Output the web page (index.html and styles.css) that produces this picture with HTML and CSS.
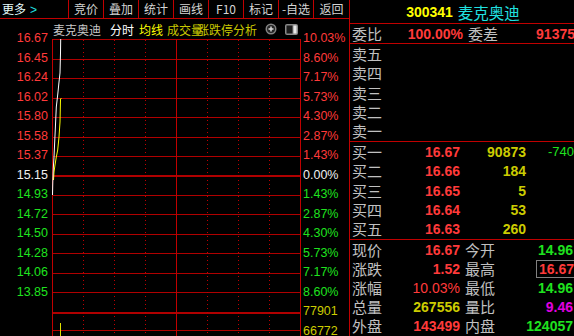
FILE: index.html
```html
<!DOCTYPE html>
<html lang="zh-CN">
<head>
    <meta charset="UTF-8">
    <title>麦克奥迪 分时</title>
    <link rel="stylesheet" href="styles.css">
</head>
<body>
    <div class="screen">
        <div class="left">
            <div class="toolbar">
                <div class="tb-item tb-more">更多<span class="arrow">&gt;</span></div>
                <div class="tb-item">竞价</div>
                <div class="tb-item">叠加</div>
                <div class="tb-item">统计</div>
                <div class="tb-item">画线</div>
                <div class="tb-item">F10</div>
                <div class="tb-item">标记</div>
                <div class="tb-item">-自选</div>
                <div class="tb-item tb-last">返回</div>
            </div>

            <div class="titlebar">
                <span class="t-name">麦克奥迪</span>
                <span class="t-fs">分时</span>
                <span class="t-ma">均线</span>
                <span class="t-vol">成交量</span>
                <span class="t-zdt">涨跌停分析</span>
                <svg class="ico ico-plus" width="12" height="12" viewBox="0 0 12 12">
                    <circle cx="6" cy="6" r="5.5" fill="#858585"/>
                    <circle cx="6" cy="6" r="4" fill="#262626"/>
                    <path d="M6 3.5v5M3.5 6h5" stroke="#d8d8d8" stroke-width="1.5"/>
                </svg>
                <svg class="ico ico-panel" width="13" height="11" viewBox="0 0 13 11">
                    <rect x="0" y="0" width="13" height="11" rx="2" fill="#8a8a8a"/>
                    <rect x="1.5" y="1.5" width="6" height="8" fill="#1c1c1c"/>
                    <rect x="8.5" y="1.5" width="3" height="8" fill="#e8e8e8"/>
                </svg>
            </div>

            <div class="chart">
                <div class="axis axis-left">
                    <div class="lbl up">16.67</div>
                    <div class="lbl up">16.45</div>
                    <div class="lbl up">16.24</div>
                    <div class="lbl up">16.02</div>
                    <div class="lbl up">15.80</div>
                    <div class="lbl up">15.58</div>
                    <div class="lbl up">15.37</div>
                    <div class="lbl flat">15.15</div>
                    <div class="lbl down">14.93</div>
                    <div class="lbl down">14.72</div>
                    <div class="lbl down">14.50</div>
                    <div class="lbl down">14.28</div>
                    <div class="lbl down">14.06</div>
                    <div class="lbl down">13.85</div>
                </div>

                <svg class="plot" width="249" height="297" viewBox="0 0 249 297">
                    <g class="grid">
                        <line x1="0" y1="0.5" x2="249" y2="0.5"/>
                        <line x1="0" y1="20.5" x2="249" y2="20.5"/>
                        <line x1="0" y1="39.5" x2="249" y2="39.5"/>
                        <line x1="0" y1="59.5" x2="249" y2="59.5"/>
                        <line x1="0" y1="78.5" x2="249" y2="78.5"/>
                        <line x1="0" y1="98.5" x2="249" y2="98.5"/>
                        <line x1="0" y1="117.5" x2="249" y2="117.5"/>
                        <line x1="0" y1="137" x2="249" y2="137" class="thick"/>
                        <line x1="0" y1="156.5" x2="249" y2="156.5"/>
                        <line x1="0" y1="175.5" x2="249" y2="175.5"/>
                        <line x1="0" y1="195.5" x2="249" y2="195.5"/>
                        <line x1="0" y1="214.5" x2="249" y2="214.5"/>
                        <line x1="0" y1="234.5" x2="249" y2="234.5"/>
                        <line x1="0" y1="253.5" x2="249" y2="253.5"/>
                        <line x1="0" y1="274" x2="249" y2="274" class="thick"/>
                        <line x1="0" y1="291.5" x2="249" y2="291.5"/>
                    </g>
                    <g class="vgrid">
                        <line x1="31.5" y1="1" x2="31.5" y2="297"/>
                        <line x1="62.5" y1="1" x2="62.5" y2="297"/>
                        <line x1="93.5" y1="1" x2="93.5" y2="297"/>
                        <line x1="155.5" y1="1" x2="155.5" y2="297"/>
                        <line x1="186.5" y1="1" x2="186.5" y2="297"/>
                        <line x1="217.5" y1="1" x2="217.5" y2="297"/>
                    </g>
                    <g class="frame">
                        <line x1="0.5" y1="0" x2="0.5" y2="297"/>
                        <line x1="124.5" y1="0" x2="124.5" y2="297"/>
                        <line x1="248.5" y1="0" x2="248.5" y2="297"/>
                    </g>
                    <polyline class="avg" points="9.5,59 8.5,60 8,83 7,98 5.7,111 4.3,118 3,126 2,133 1.5,141"/>
                    <polyline class="price" points="8.7,0 8.5,14 8,34 6.9,44 5.9,54 4.3,68 3.3,90 2.7,103 2,118 1.3,129 0.8,143 0.5,156"/>
                    <line class="volbar" x1="8.5" y1="284" x2="8.5" y2="297"/>
                </svg>

                <div class="axis axis-right">
                    <div class="lbl up">10.03%</div>
                    <div class="lbl up">8.60%</div>
                    <div class="lbl up">7.17%</div>
                    <div class="lbl up">5.73%</div>
                    <div class="lbl up">4.30%</div>
                    <div class="lbl up">2.87%</div>
                    <div class="lbl up">1.43%</div>
                    <div class="lbl flat">0.00%</div>
                    <div class="lbl down">1.43%</div>
                    <div class="lbl down">2.87%</div>
                    <div class="lbl down">4.30%</div>
                    <div class="lbl down">5.73%</div>
                    <div class="lbl down">7.17%</div>
                    <div class="lbl down">8.60%</div>
                    <div class="lbl vol">77901</div>
                    <div class="lbl vol lbl-short">66772</div>
                </div>
            </div>
        </div>

        <div class="right">
            <div class="quote-head">
                <span class="code">300341</span>
                <span class="qname">麦克奥迪</span>
            </div>

            <div class="row row-wb">
                <span class="name">委比</span>
                <span class="num up b">100.00%</span>
                <span class="name name2">委差</span>
                <span class="num up b">91375</span>
            </div>

            <div class="block sell">
                <div class="row book"><span class="name">卖五</span></div>
                <div class="row book"><span class="name">卖四</span></div>
                <div class="row book"><span class="name">卖三</span></div>
                <div class="row book"><span class="name">卖二</span></div>
                <div class="row book"><span class="name">卖一</span></div>
            </div>

            <div class="block buy">
                <div class="row book">
                    <span class="name">买一</span>
                    <span class="num up b">16.67</span>
                    <span class="num vol b">90873</span>
                    <span class="chg down">-740</span>
                </div>
                <div class="row book">
                    <span class="name">买二</span>
                    <span class="num up b">16.66</span>
                    <span class="num vol b">184</span>
                </div>
                <div class="row book">
                    <span class="name">买三</span>
                    <span class="num up b">16.65</span>
                    <span class="num vol b">5</span>
                </div>
                <div class="row book">
                    <span class="name">买四</span>
                    <span class="num up b">16.64</span>
                    <span class="num vol b">53</span>
                </div>
                <div class="row book">
                    <span class="name">买五</span>
                    <span class="num up b">16.63</span>
                    <span class="num vol b">260</span>
                </div>
            </div>

            <div class="stats">
                <div class="row stat">
                    <span class="name">现价</span>
                    <span class="num up b">16.67</span>
                    <span class="name name2">今开</span>
                    <span class="num down b">14.96</span>
                </div>
                <div class="row stat">
                    <span class="name">涨跌</span>
                    <span class="num up b">1.52</span>
                    <span class="name name2">最高</span>
                    <span class="num"><span class="boxed up b">16.67</span></span>
                </div>
                <div class="row stat">
                    <span class="name">涨幅</span>
                    <span class="num up">10.03%</span>
                    <span class="name name2">最低</span>
                    <span class="num down b">14.96</span>
                </div>
                <div class="row stat">
                    <span class="name">总量</span>
                    <span class="num vol b">267556</span>
                    <span class="name name2">量比</span>
                    <span class="num ratio b">9.46</span>
                </div>
                <div class="row stat">
                    <span class="name">外盘</span>
                    <span class="num up b">143499</span>
                    <span class="name name2">内盘</span>
                    <span class="num down b">124057</span>
                </div>
            </div>
        </div>
    </div>
</body>
</html>
```

FILE: styles.css
```css
html, body {
    margin: 0;
    padding: 0;
    background: #000;
}
body {
    width: 574px;
    height: 336px;
    overflow: hidden;
    font-family: "Noto Sans CJK SC", "Liberation Sans", sans-serif;
    color: #c0c0c0;
}
.screen {
    display: flex;
    height: 336px;
}

/* left: toolbar + chart */
.left {
    width: 349px;
    border-right: 1px solid #c00000;
    display: flex;
    flex-direction: column;
}
.toolbar {
    display: flex;
    height: 18px;
    border-bottom: 1px solid #c00000;
}
.tb-item {
    width: 34px;
    border-right: 1px solid #c00000;
    font-size: 12px;
    line-height: 18px;
    text-align: center;
    color: #d4d4d4;
    white-space: nowrap;
    overflow: hidden;
}
.tb-more {
    width: 69px;
    text-align: left;
    padding-left: 2px;
    box-sizing: border-box;
    color: #e4fbfb;
}
.tb-more .arrow {
    color: #20e0e0;
    margin-left: 4px;
    font-family: "Liberation Sans", sans-serif;
}
.tb-last {
    flex: 1;
    border-right: none;
}

.titlebar {
    height: 20px;
    display: flex;
    align-items: center;
    padding-left: 53px;
    font-size: 12px;
    white-space: nowrap;
}
.t-name { color: #c8c8c8; margin-right: 9px; }
.t-fs { color: #fff; margin-right: 5px; }
.t-ma { color: #ffff00; margin-right: 4px; }
.t-vol { color: #c8c800; }
.t-zdt { color: #c8c800; margin-left: -6px; }
.ico { margin-left: 8px; }
.ico-panel { margin-left: 8px; }

.chart {
    flex: 1;
    display: flex;
    min-height: 0;
}
.axis {
    display: flex;
    flex-direction: column;
    margin-top: -10px;
    font-family: "Liberation Sans", sans-serif;
    font-size: 12.5px;
}
.axis-left {
    width: 52px;
    text-align: right;
}
.axis-left .lbl {
    padding-right: 4px;
}
.axis-right {
    width: 48px;
    padding-left: 2px;
    box-sizing: border-box;
}
.lbl {
    height: 19.5px;
    line-height: 19.5px;
    flex: none;
}
.lbl-short {
    height: 17px;
}
.up { color: #ff3a3a; }
.down { color: #1fe21f; }
.flat { color: #f0f0f0; }
.vol { color: #cccc00; }
.ratio { color: #e000e0; }

.plot {
    display: block;
    flex: none;
}
.grid line {
    stroke: #b00000;
    stroke-width: 1;
}
.grid line.thick {
    stroke-width: 2;
}
.vgrid line {
    stroke: #c00000;
    stroke-width: 1;
    stroke-dasharray: 1 3;
}
.frame line {
    stroke: #c00000;
    stroke-width: 1;
}
.price {
    fill: none;
    stroke: #fff;
    stroke-width: 1;
}
.avg {
    fill: none;
    stroke: #ffff00;
    stroke-width: 1;
}
.volbar {
    stroke: #e0e000;
    stroke-width: 1;
}

/* right: quote panel */
.right {
    width: 224px;
    height: 336px;
    display: flex;
    flex-direction: column;
    overflow: hidden;
}
.quote-head {
    height: 23px;
    flex: none;
    border-bottom: 1px solid #c00000;
    display: flex;
    align-items: center;
    justify-content: center;
    gap: 5px;
    padding-left: 2px;
}
.code {
    font-family: "Liberation Sans", sans-serif;
    font-weight: bold;
    font-size: 14px;
    color: #ffff00;
}
.qname {
    font-size: 15.5px;
    color: #20e0e0;
}

.row {
    display: grid;
    align-items: center;
    padding-left: 2px;
    white-space: nowrap;
    line-height: 18px;
    overflow: visible;
}
.name {
    font-size: 15px;
    line-height: 18px;
    color: #c0c0c0;
}
.name2 {
    padding-left: 5px;
}
.num {
    font-family: "Liberation Sans", sans-serif;
    font-size: 14px;
    line-height: 18px;
    text-align: right;
}
.b {
    font-weight: bold;
}

.row-wb {
    height: 19px;
    flex: none;
    border-bottom: 1px solid #c00000;
    grid-template-columns: 38px 73px 45px 1fr;
}
.row-wb .num:last-child {
    margin-right: -1px;
}

.block {
    flex: none;
    height: 97px;
    display: flex;
    flex-direction: column;
    border-bottom: 1px solid #c00000;
}
.book {
    flex: 1;
    min-height: 0;
    grid-template-columns: 38px 70px 66px 1fr;
}
.chg {
    font-family: "Liberation Sans", sans-serif;
    font-size: 13px;
    padding-left: 22px;
}

.stats {
    flex: 1;
    min-height: 0;
    display: flex;
    flex-direction: column;
}
.stat {
    flex: 1;
    min-height: 0;
    grid-template-columns: 38px 70px 48px 1fr;
    padding-right: 1px;
}
.boxed {
    display: inline-block;
    border: 1px solid #808080;
    padding: 0 2px 0 2px;
    line-height: 16px;
    margin-right: -4px;
}
```
